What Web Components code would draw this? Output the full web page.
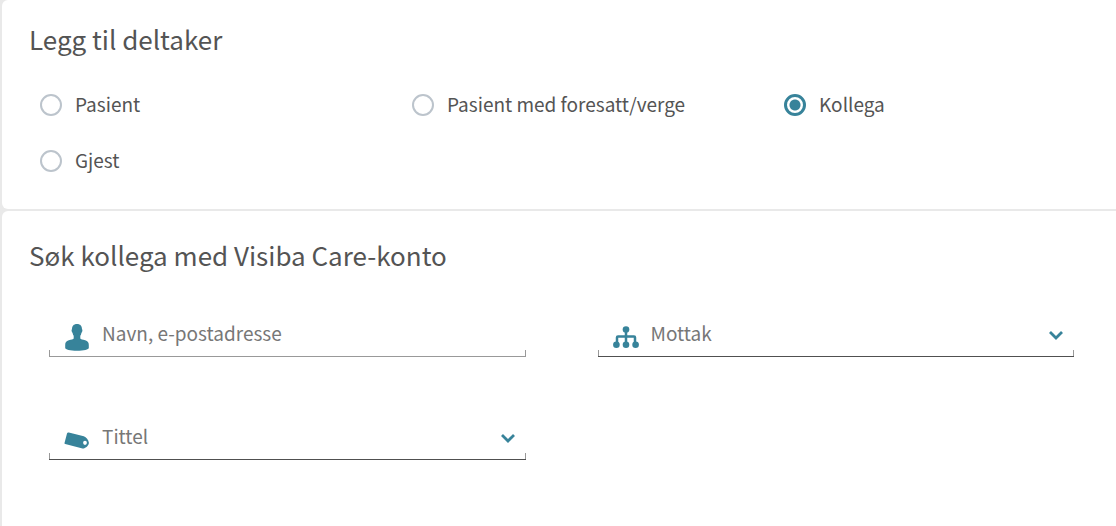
<!DOCTYPE html>
<html lang="no">
<head>
<meta charset="utf-8">
<title>Legg til deltaker</title>
<style>
	html {
		background: #e9e9e9;
	}
	body {
		--accent: #37839a;
		color: #545454;
		font-family: "Noto Sans CJK SC", "Noto Sans", sans-serif;
		font-size: 19px;
		margin: 0;
		overflow-x: hidden;
	}
</style>
</head>
<body>
<participant-form></participant-form>

<script>
const icons = {
	person: `
		<svg viewBox="0 0 24 28" width="24" height="28" aria-hidden="true">
			<path d="M12 1C8.600 1 6.900 3.200 7 6.300c-.8.300-.4 3 .6 3.600.2 1.300.6 2.200 1.100 2.900v2.800c-.3.800-2.500 1-4.900 1.700C1.200 18.200.2 19.500.2 22v3c0 1.500 5 2.700 11.800 2.700s11.800-1.200 11.800-2.700v-3c0-2.500-1-3.800-3.600-4.700-2.400-.7-4.600-.9-4.900-1.700v-2.800c.5-.7.9-1.600 1.100-2.900 1-.6 1.400-3.300.6-3.600C17.100 3.200 15.400 1 12 1z"/>
		</svg>`,
	hierarchy: `
		<svg viewBox="0 0 26 22" width="26" height="22" aria-hidden="true">
			<path d="M13 5v11M4 17v-5.500a1 1 0 0 1 1-1h16a1 1 0 0 1 1 1V17" fill="none" stroke="currentColor" stroke-width="2.500"/>
			<circle cx="13" cy="3.500" r="3.300"/>
			<circle cx="3.400" cy="18.700" r="3.300"/>
			<circle cx="13" cy="18.700" r="3.300"/>
			<circle cx="22.600" cy="18.700" r="3.300"/>
		</svg>`,
	tag: `
		<svg viewBox="0 0 26 18" width="26" height="18" aria-hidden="true">
			<path fill-rule="evenodd" d="M4.800 1.600 19.800 5.300c2.400.9 4.800 3.900 5.100 6.400.1 2.200-2.600 5-5 5.700-.8.200-1.500.1-2.300-.1L1.200 13.100c-.6-.2-.8-.6-.7-1.200L3 2.500c.3-.8.900-1.100 1.800-.9zM21 9.700a1.900 2.100 0 1 0 0 4.200 1.900 2.100 0 0 0 0-4.200z"/>
		</svg>`,
	chevron: `
		<svg viewBox="0 0 16 10" width="16" height="10" aria-hidden="true">
			<path d="M2 2l6 6 6-6" fill="none" stroke="currentColor" stroke-width="2.800"/>
		</svg>`
};

class FormPanel extends HTMLElement {
	constructor() {
		super();
		this.attachShadow({ mode: 'open' }).innerHTML = `
			<style>
				:host {
					background: white;
					border-radius: 6px 0 0 6px;
					display: block;
				}
				:host(:last-of-type) {
					border-bottom-left-radius: 0;
				}
				h2 {
					font-size: 26px;
					font-weight: normal;
					line-height: 32px;
					margin: 0;
					padding: 0 27px;
				}
			</style>
			<section>
				<h2>${this.getAttribute('heading')}</h2>
				<slot></slot>
			</section>
		`;
	}
}

class RadioChoices extends HTMLElement {
	constructor() {
		super();
		const items = this.getAttribute('options').split(',');
		this.attachShadow({ mode: 'open' }).innerHTML = `
			<style>
				:host {
					display: block;
				}
				.choices {
					display: grid;
					grid-template-columns: repeat(3, 1fr);
					margin-right: -2px;
				}
				label {
					align-items: center;
					cursor: pointer;
					display: flex;
					gap: 13px;
					height: 56px;
					padding-left: 38px;
				}
				span {
					padding-bottom: 3px;
				}
				input {
					appearance: none;
					background: white;
					border: 2px solid #bcc4cc;
					border-radius: 50%;
					box-sizing: border-box;
					flex: none;
					height: 22px;
					margin: 0;
					width: 22px;
				}
				input:checked {
					background: radial-gradient(circle, var(--accent) 5px, white 6px);
					border: 3px solid var(--accent);
				}
			</style>
			<div class="choices" role="radiogroup" aria-label="Deltaker">
				${items.map((item) => `
					<label>
						<input type="radio" name="type" ${item === this.getAttribute('selected') ? 'checked' : ''}>
						<span>${item}</span>
					</label>
				`).join('\n')}
			</div>
		`;
	}
}

class SearchField extends HTMLElement {
	constructor() {
		super();
		const label = this.getAttribute('label');
		const isSelect = this.hasAttribute('select');
		this.attachShadow({ mode: 'open' }).innerHTML = `
			<style>
				:host {
					--line: #999;
					display: block;
				}
				:host([select]) {
					--line: #505050;
				}
				/* the short ticks at both ends of the underline */
				.field {
					align-items: center;
					background:
						linear-gradient(#999, #999) left bottom / 1px 6px no-repeat,
						linear-gradient(#999, #999) right bottom / 1px 6px no-repeat;
					border-bottom: 1px solid var(--line);
					display: flex;
					height: 42px;
					padding: 0 10px 0 13px;
				}
				.icon {
					color: var(--accent);
					display: flex;
					flex: none;
					justify-content: center;
					padding-top: 4px;
					width: 30px;
				}
				.chevron {
					color: var(--accent);
					display: flex;
					flex: none;
					pointer-events: none;
				}
				svg {
					fill: currentColor;
				}
				input, select {
					appearance: none;
					background: none;
					border: 0;
					box-sizing: border-box;
					color: #777;
					flex: 1;
					font: inherit;
					height: 40px;
					margin: 0;
					min-width: 0;
					outline: 0;
					padding: 0 0 5px 10px;
				}
				input::placeholder {
					color: #777;
				}
			</style>
			<div class="field">
				<span class="icon">${icons[this.getAttribute('icon')]}</span>
				${isSelect
					? `<select aria-label="${label}"><option>${label}</option></select>
						<span class="chevron">${icons.chevron}</span>`
					: `<input type="text" aria-label="${label}" placeholder="${label}">`}
			</div>
		`;
	}
}

class ParticipantForm extends HTMLElement {
	constructor() {
		super();
		this.attachShadow({ mode: 'open' }).innerHTML = `
			<style>
				:host {
					box-sizing: border-box;
					display: flex;
					flex-direction: column;
					gap: 2px;
					min-height: 100vh;
					padding-left: 2px;
				}
				.type {
					padding: 23px 0 20px;
				}
				radio-choices {
					margin-top: 22px;
				}
				.search {
					flex: 1;
					padding: 28px 0 24px;
				}
				.fields {
					display: grid;
					gap: 60px 72px;
					grid-template-columns: 1fr 1fr;
					padding: 43px 42px 0 47px;
				}
			</style>
			<form-panel class="type" heading="Legg til deltaker">
				<radio-choices
					options="Pasient,Pasient med foresatt/verge,Kollega,Gjest"
					selected="Kollega"
				></radio-choices>
			</form-panel>
			<form-panel class="search" heading="Søk kollega med Visiba Care-konto">
				<div class="fields">
					<search-field icon="person" label="Navn, e-postadresse"></search-field>
					<search-field icon="hierarchy" label="Mottak" select></search-field>
					<search-field icon="tag" label="Tittel" select></search-field>
				</div>
			</form-panel>
		`;
	}
}

customElements.define('form-panel', FormPanel);
customElements.define('radio-choices', RadioChoices);
customElements.define('search-field', SearchField);
customElements.define('participant-form', ParticipantForm);
</script>
</body>
</html>
